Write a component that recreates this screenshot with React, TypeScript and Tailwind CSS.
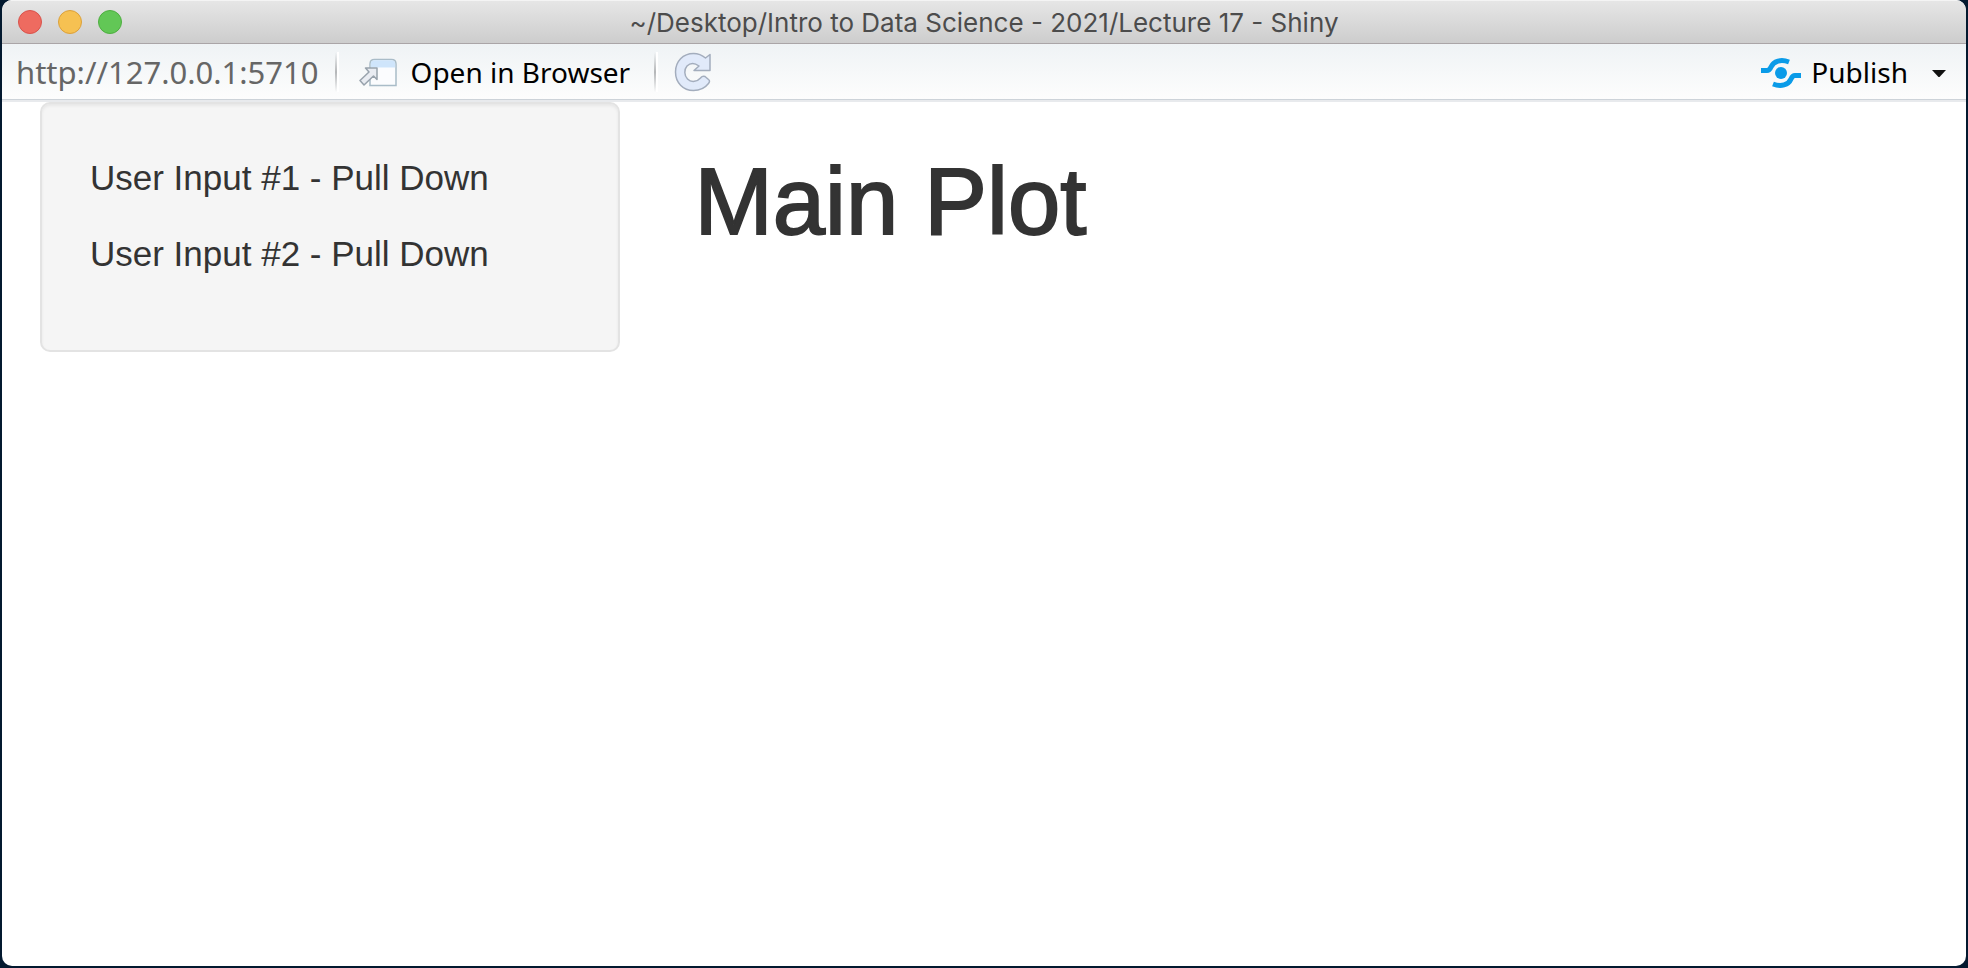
import React from "react";

function TrafficLight({ label, className }: { label: string; className: string }) {
  return <button type="button" aria-label={label} className={`size-6 rounded-full border ${className}`} />;
}

function Divider() {
  return <div className="h-10 w-1 border-r-2 border-white bg-linear-to-b from-transparent via-[#b4b6b8] to-transparent" />;
}

function OpenIcon() {
  return (
    <svg width="40" height="30" viewBox="0 0 40 30" aria-hidden="true">
      <path d="M11 27.5V6Q11 1.500 15.500 1.500H32.500Q37 1.500 37 6V27.500Z" fill="#fbfcfe" stroke="#a9bcc8" strokeWidth="1.5" />
      <path d="M11.800 9.500V6Q11.800 2.300 15.500 2.300H32.500Q36.200 2.300 36.200 6V9.500Z" fill="#cfe5fb" />
      <path d="M6.500 10H18V21.500L14.500 18L5 27L1 22.500L10 14Z" fill="#e9ecf2" stroke="#98a2ac" strokeWidth="1.5" strokeLinejoin="round" />
    </svg>
  );
}

function RefreshIcon() {
  return (
    <svg width="38" height="40" viewBox="0 0 38 40" aria-hidden="true">
      <path
        d="M36 2.500V18.500H20L25 14C21 11 16.500 10.500 13 14C10 17.500 10 23.500 13.500 27C17.500 31 23.500 29.500 26.500 26Q28.500 23.500 31 24.500L34.500 27.500Q36.500 29 34.500 31.500C31 36 25.500 38.500 19.500 38.500C9 38.500 1.500 30.500 1.500 20C1.500 9.500 9 1.500 19.500 1.500C24 1.500 28 3 31.500 6Z"
        fill="#e1eafa"
        stroke="#a3adbd"
        strokeWidth="1.5"
        strokeLinejoin="round"
      />
    </svg>
  );
}

function PublishIcon() {
  return (
    <svg width="40" height="30" viewBox="0 0 40 30" aria-hidden="true">
      <circle cx="20" cy="15" r="6" fill="#0a9be8" />
      <path d="M0 12.500H6Q8.500 12.500 10 9C12.500 3 20 1 28 4" fill="none" stroke="#0a9be8" strokeWidth="5" />
      <path d="M40 17.500H34Q31.500 17.500 30 21C27.500 27 20 29 12 26" fill="none" stroke="#0a9be8" strokeWidth="5" />
    </svg>
  );
}

export default function App() {
  return (
    <div className="h-screen bg-[#03192f] px-0.5 pb-0.5 font-['Liberation_Sans',sans-serif] text-[#333]">
      <div className="flex h-full flex-col overflow-hidden rounded-[10px] bg-white">
        <header className="grid h-11 shrink-0 grid-cols-[1fr_auto_1fr] items-center border-t border-b border-t-[#f4f4f4] border-b-[#aaa5a7] bg-linear-to-b from-[#e6e6e6] to-[#cdcdcd] px-4">
          <div className="flex gap-4">
            <TrafficLight label="Close" className="border-[#d8534c] bg-[#ee6b60]" />
            <TrafficLight label="Minimize" className="border-[#dba03b] bg-[#f6c152]" />
            <TrafficLight label="Zoom" className="border-[#4eae40] bg-[#62c756]" />
          </div>
          <div className="pt-0.5 font-['Inter',sans-serif] text-[26px] leading-8 text-[#4c4c4c]">
            ~/Desktop/Intro to Data Science - 2021/Lecture 17 - Shiny
          </div>
        </header>

        <nav className="flex h-14 shrink-0 items-center border-b border-b-[#cdd3d9] bg-linear-to-b from-[#eff3f5] to-[#fdfdfd] pr-5 pl-3.5 font-['Noto_Sans',sans-serif] text-[28px] leading-8 text-black">
          <span className="text-[31px] text-[#666]">http://127.0.0.1:5710</span>
          <div className="ml-4 flex items-center gap-5">
            <Divider />
            <button type="button" className="flex items-end gap-3 pr-1">
              <OpenIcon />
              Open in Browser
            </button>
            <Divider />
            <button type="button" aria-label="Refresh" className="-ml-1">
              <RefreshIcon />
            </button>
          </div>
          <div className="ml-auto flex items-center gap-6">
            <button type="button" className="flex items-end gap-2.5">
              <PublishIcon />
              Publish
            </button>
            <button type="button" aria-label="Publish options" className="pt-1">
              <svg width="14" height="8" viewBox="0 0 14 8" aria-hidden="true">
                <path d="M0 0H14L8 6.500Q7 7.500 6 6.500Z" fill="#111" />
              </svg>
            </button>
          </div>
        </nav>
        <div className="h-0.5 shrink-0 bg-[#e8eaed]" />

        <main className="grid grow grid-cols-[8fr_17fr] items-start gap-[74px] px-[38px]">
          <aside className="min-h-[250px] rounded-[10px] border-2 border-[#e3e3e3] bg-[#f5f5f5] px-12 py-[50px] text-[35px] leading-12 shadow-[inset_0_2px_3px_rgba(0,0,0,0.06)]">
            <p>User Input #1 - Pull Down</p>
            <p className="mt-7">User Input #2 - Pull Down</p>
          </aside>
          <section className="pt-[50px]">
            <h1 className="text-[94px] leading-[100px] [-webkit-text-stroke:2px_#333]">Main Plot</h1>
          </section>
        </main>
      </div>
    </div>
  );
}
